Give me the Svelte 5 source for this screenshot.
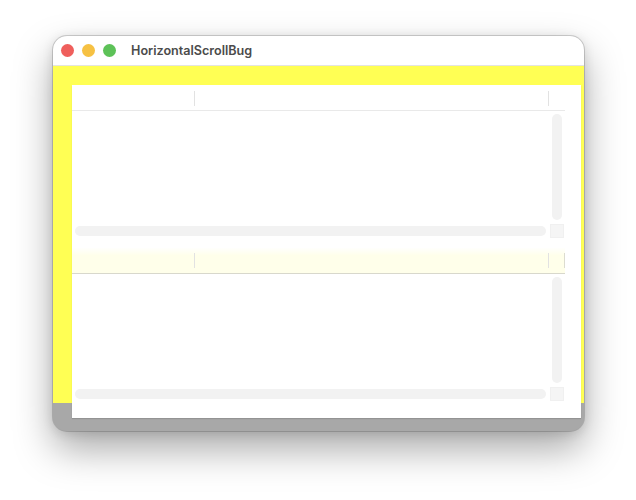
<script>
  const grids = [{ tinted: false }, { tinted: true }];
</script>

<div class="stage">
  <div class="window">
    <header class="titlebar">
      <span class="dot red"></span>
      <span class="dot amber"></span>
      <span class="dot green"></span>
      <span class="title">HorizontalScrollBug</span>
    </header>
    <div class="content">
      <div class="yellow"></div>
      <div class="panel">
        {#each grids as grid}
          <section class="grid">
            <div class="head" class:tinted={grid.tinted}>
              <div class="col first"></div>
              <div class="col second"></div>
              <div class="col filler"></div>
            </div>
            <div class="body">
              <div class="vtrack"><div class="thumb"></div></div>
              <div class="htrack"><div class="thumb"></div></div>
              <div class="corner"></div>
            </div>
          </section>
        {/each}
      </div>
    </div>
  </div>
</div>

<style>
:global(body) {
  background: #fff;
}
.stage {
  height: 500px;
  box-sizing: border-box;
  padding: 36px 0 0 53px;
  overflow: hidden;
}
.window {
  width: 531px;
  height: 395px;
  border-radius: 14px;
  overflow: hidden;
  display: flex;
  flex-direction: column;
  box-shadow: 0 0 0 1px rgba(0, 0, 0, 0.16), 0 2px 12px rgba(0, 0, 0, 0.12), 0 18px 38px rgba(0, 0, 0, 0.34);
  background: #a8a8a8;
}
.titlebar {
  height: 29px;
  flex: none;
  background: #fff;
  border-bottom: 1px solid #e4e4e0;
  display: flex;
  align-items: center;
  padding-left: 8px;
  gap: 8px;
  font-family: "Inter", "Liberation Sans", sans-serif;
}
.dot {
  width: 13px;
  height: 13px;
  border-radius: 50%;
}
.red { background: #ef5f5c; }
.amber { background: #f6c143; }
.green { background: #5dc258; }
.title {
  margin-left: 7px;
  font-size: 12.6px;
  font-weight: 600;
  color: #4b4b4b;
}
.content {
  flex: 1;
  position: relative;
}
.yellow {
  height: 337px;
  background: #ffff54;
}
.panel {
  position: absolute;
  left: 19px;
  top: 19px;
  width: 509px;
  height: 333px;
  background: #fff;
  box-shadow: 0 1px 1px rgba(0, 0, 0, 0.12);
}
.grid {
  width: 493px;
  height: 163px;
}
.head {
  height: 26px;
  display: flex;
  border-bottom: 1.5px solid #e9e9e9;
  box-sizing: border-box;
  padding: 6px 0 4px;
}
.head.tinted {
  background: linear-gradient(#fffffd, #ffffea 30%);
  border-bottom-color: #d8d8cc;
  padding: 5px 0 5px;
}
.col {
  border-right: 1px solid #e2e2e2;
  box-sizing: border-box;
}
.first { width: 123px; }
.second { width: 354px; }
.filler { flex: 1; border-right: none; }
.tinted .filler { border-right: 1px solid #dcdcd0; }
.body {
  display: grid;
  grid-template-columns: 1fr 14px;
  grid-template-rows: 1fr 14px;
  height: 127px;
  box-sizing: border-box;
  padding: 3px 1px 0 3px;
  column-gap: 4px;
  row-gap: 3px;
}
.vtrack {
  grid-column: 2;
  grid-row: 1;
  display: flex;
  justify-content: center;
}
.vtrack .thumb {
  width: 10px;
  height: 106px;
  border-radius: 5px;
  background: #f2f2f2;
}
.htrack {
  grid-column: 1;
  grid-row: 2;
  display: flex;
  align-items: center;
}
.htrack .thumb {
  width: 471px;
  height: 10px;
  border-radius: 5px;
  background: #f2f2f2;
}
.corner {
  grid-column: 2;
  grid-row: 2;
  background: #f5f5f5;
  border: 1px solid #f0f0f0;
  box-sizing: border-box;
}
</style>
